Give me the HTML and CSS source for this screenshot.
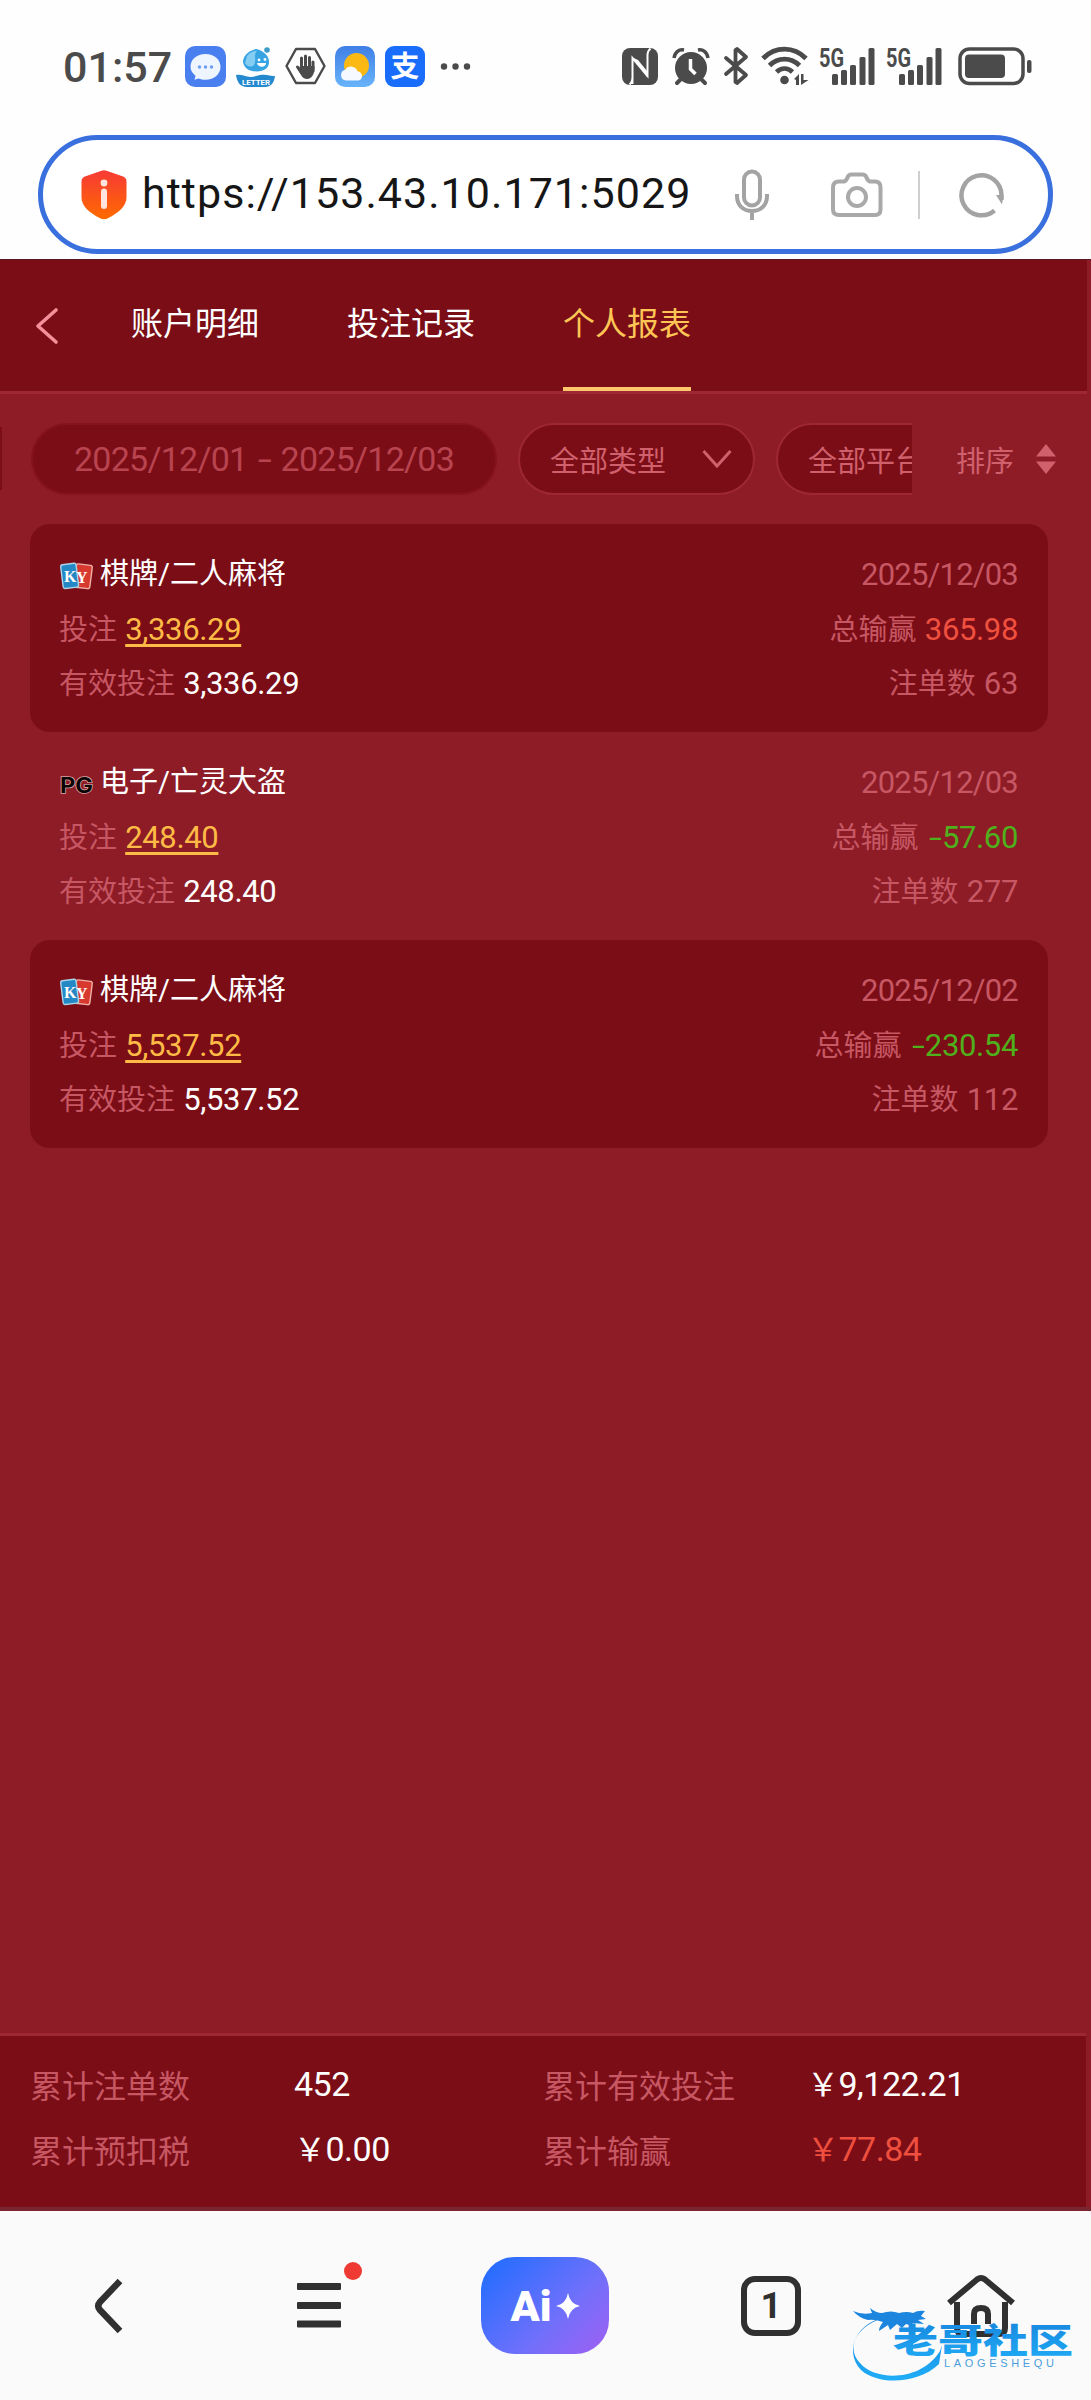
FILE: index.html
```html
<!DOCTYPE html>
<html lang="zh-CN">
<head>
<meta charset="utf-8">
<title>个人报表</title>
<link rel="stylesheet" href="styles.css">
</head>
<body>
<header class="browser-top">
  <div class="status">
    <div class="status-left">
      <span class="clock">01:57</span>
      <div class="apps">
        <svg width="41" height="41" viewBox="0 0 41 41"><rect width="41" height="41" rx="10" fill="#4a7ff0"/><path d="M20.500 8c9 0 15 5.500 15 12.800s-6 13-15 13c-2.800 0-4.600-.3-7-1.300l-4 1.200 1-4c-3-2.300-5-5-5-8.900C5.500 13.500 11.500 8 20.500 8z" fill="#eef5ff"/><g fill="#6d9cf0"><circle cx="14.500" cy="21" r="1.700"/><circle cx="20.500" cy="21" r="1.700"/><circle cx="26.500" cy="21" r="1.700"/></g></svg>
        <svg width="41" height="41" viewBox="0 0 41 41"><path d="M21 3C26 4 34 8 34 16c0 6-5 9.500-12.500 9.500S9 22 8 16c0-5 4-11 13-13z" fill="#36a3e3"/><path d="M12 10c3-4 7-5 10-5-4 4 0 9-3 14-3 3-8 1-9-2z" fill="#83cdf3"/><circle cx="32" cy="4" r="2.800" fill="#3c9cc9"/><circle cx="24" cy="14" r="1.400" fill="#fff"/><circle cx="30" cy="13.500" r="1.400" fill="#fff"/><path d="M22 17h9c0 5-8 5-9 0z" fill="#fff"/><path d="M1 29c8-1 11 4 20 1 8-3 14 0 19 0-1 7-4 11-10 11H12C5 41 2 36 1 29z" fill="#2489cf"/><text x="7" y="38.500" class="letter-tag" textLength="28" lengthAdjust="spacingAndGlyphs">LETTER</text></svg>
        <svg width="41" height="41" viewBox="0 0 41 41"><path d="M11 3h19l9.500 17L30 37H11L1.500 20z" fill="#fff" stroke="#4b4b4b" stroke-width="2.400" stroke-linejoin="round"/><g stroke="#4b4b4b" stroke-width="3" stroke-linecap="round"><path d="M16.500 12v12M20.500 10v14M24.500 11.500v12M28 16v9M12.500 21l4 6"/></g><path d="M15 20h14.400c.8 7-2.400 13-7.400 13-4.500 0-6-4-8.500-9z" fill="#4b4b4b"/></svg>
        <svg width="41" height="41" viewBox="0 0 41 41"><defs><linearGradient id="sky" x1="0" y1="0" x2="0" y2="1"><stop offset="0" stop-color="#3f7fe6"/><stop offset="1" stop-color="#68b4fa"/></linearGradient></defs><rect width="40" height="41" rx="10" fill="url(#sky)"/><circle cx="21.500" cy="19.500" r="12.500" fill="#fdb913"/><path d="M11 34.500a5.500 5.500 0 0 1-.8-10.800 7 7 0 0 1 12.500 1.800 4.600 4.600 0 0 1 1 9z" fill="#f6f9ff"/></svg>
        <svg width="41" height="41" viewBox="0 0 41 41"><rect width="40" height="41" rx="9" fill="#1a6dfb"/><text x="5.500" y="31" class="pay-mark">支</text></svg>
        <svg class="more" width="32" height="41" viewBox="0 0 32 41" fill="#4b4b4b"><circle cx="5" cy="20.500" r="3.200"/><circle cx="16.500" cy="20.500" r="3.200"/><circle cx="28" cy="20.500" r="3.200"/></svg>
      </div>
    </div>
    <div class="status-right">
      <svg class="nfc" width="38" height="40" viewBox="0 0 38 40"><rect x="1" y="2" width="36" height="37" rx="8" fill="#4b4b4b"/><path d="M11.500 38V12l15 18V9q0-4 3-6.500M11.500 31q0 5-3 7.500" fill="none" stroke="#fefefe" stroke-width="2"/><path d="M11.500 11.500L17 14l9 11v6z" fill="#fefefe"/></svg>
      <svg class="alarm" width="38" height="40" viewBox="0 0 38 40"><circle cx="19" cy="22" r="16" fill="#4b4b4b"/><path d="M8 34l-3 3M30 34l3 3" stroke="#4b4b4b" stroke-width="4" stroke-linecap="round"/><path d="M2 12c1-6 5-9 10-8M36 12c-1-6-5-9-10-8" fill="none" stroke="#4b4b4b" stroke-width="3.500"/><path d="M18.500 13v10l5 5" fill="none" stroke="#fff" stroke-width="3.500"/></svg>
      <svg class="bt" width="26" height="40" viewBox="0 0 26 40"><path d="M3 12l20 17-9 8-1.500-1V4L14 3l9 8L3 28" fill="none" stroke="#4b4b4b" stroke-width="3.800" stroke-linejoin="round" stroke-linecap="round"/></svg>
      <svg class="wifi" width="48" height="40" viewBox="0 0 48 40"><g fill="none" stroke="#4b4b4b" stroke-width="4.800"><path d="M2 12.500c12-12.500 31-12.500 43 0"/><path d="M8.500 19.500c8.500-8.500 21.500-8.500 30 0"/><path d="M15.500 26c5-4.600 11-4.600 16 0"/></g><circle cx="23.500" cy="34" r="4.300" fill="#4b4b4b"/><path d="M33 33l5-5v11h-3v-5zM40 28h2.500v6h5L40 39z" fill="#4b4b4b"/></svg>
      <svg class="sig" width="57" height="40" viewBox="0 0 57 40" fill="#4b4b4b"><text x="0" y="20.500" class="g5" textLength="25" lengthAdjust="spacingAndGlyphs">5G</text><rect x="13" y="28" width="6" height="11" rx="1.500"/><rect x="22" y="24" width="6" height="15" rx="1.500"/><rect x="31" y="19" width="6" height="20" rx="1.500"/><rect x="40.500" y="11" width="6" height="28" rx="1.500"/><rect x="49.500" y="2" width="6" height="37" rx="1.500"/></svg>
      <svg class="sig" width="57" height="40" viewBox="0 0 57 40" fill="#4b4b4b"><text x="0" y="20.500" class="g5" textLength="25" lengthAdjust="spacingAndGlyphs">5G</text><rect x="13" y="28" width="6" height="11" rx="1.500"/><rect x="22" y="24" width="6" height="15" rx="1.500"/><rect x="31" y="19" width="6" height="20" rx="1.500"/><rect x="40.500" y="11" width="6" height="28" rx="1.500"/><rect x="49.500" y="2" width="6" height="37" rx="1.500"/></svg>
      <svg class="batt" width="76" height="40" viewBox="0 0 76 40"><rect x="2" y="3" width="63" height="34.500" rx="9.500" fill="none" stroke="#4b4b4b" stroke-width="3.500"/><rect x="7" y="8.500" width="40" height="23.500" rx="4" fill="#4b4b4b"/><rect x="69" y="14" width="4.500" height="13" rx="2" fill="#4b4b4b"/></svg>
    </div>
  </div>
  <div class="address">
    <svg class="shield" width="46" height="50" viewBox="0 0 46 50"><defs><linearGradient id="warn" x1="0" y1="0" x2="0" y2="1"><stop offset="0" stop-color="#f73a35"/><stop offset="1" stop-color="#ff6a00"/></linearGradient></defs><path d="M20.500.8q2.500-1 5 0L42 6.500q3.500 1.300 3.500 5V27c0 9-7 15-18.500 21.300q-4 2-8 0C7.500 42 .5 36 .5 27V11.500q0-3.700 3.500-5z" fill="url(#warn)"/><circle cx="23" cy="13" r="3.400" fill="#ffe3dc"/><rect x="20" y="18.500" width="6" height="20.500" rx="3" fill="#ffe3dc"/></svg>
    <span class="url">https://153.43.10.171:5029</span>
    <svg class="mic" width="34" height="52" viewBox="0 0 34 52" fill="none" stroke="#a3a3a3" stroke-width="4"><rect x="9" y="2.500" width="16" height="34" rx="8"/><path d="M2 25v2c0 9 6 15 15 15s15-6 15-15v-2M17 42v9"/></svg>
    <svg class="cam" width="52" height="46" viewBox="0 0 52 46" fill="none" stroke="#a9a9a9" stroke-width="4"><path d="M8 9.500h4q2.500 0 3.500-2l1.500-3q1-2 3.500-2h11q2.500 0 3.500 2l1.500 3q1 2 3.500 2h4q5.500 0 5.500 6v22q0 5.500-5.500 5.500H8Q2 43 2 37.500v-22q0-6 6-6z"/><circle cx="26" cy="25" r="9"/></svg>
    <i class="divider"></i>
    <svg class="reload" width="46" height="48" viewBox="0 0 46 48"><path d="M35.500 39.500A20 20 0 1 1 42.500 24v5" fill="none" stroke="#a3a3a3" stroke-width="4.500"/><path d="M37 24h7.500l-1.500 9.500z" fill="#a3a3a3"/></svg>
  </div>
</header>

<main class="page">
  <nav class="tabs">
    <svg class="back" width="24" height="38" viewBox="0 0 24 38"><path d="M21 3L3 19l18 16" fill="none" stroke="#f4909a" stroke-width="3.600" stroke-linecap="round" stroke-linejoin="round"/></svg>
    <a class="tab">账户明细</a>
    <a class="tab">投注记录</a>
    <a class="tab active">个人报表</a>
  </nav>

  <section class="filters">
    <div class="scroller">
      <i class="pill-edge"></i>
      <span class="pill date">2025/12/01<b class="dash">-</b>2025/12/03</span>
      <span class="pill">全部类型<svg width="30" height="20" viewBox="0 0 30 20"><path d="M1.500 2L15 17 28.500 2" fill="none" stroke="#d0606c" stroke-width="3"/></svg></span>
      <span class="pill">全部平台<svg width="30" height="20" viewBox="0 0 30 20"><path d="M1.500 2L15 17 28.500 2" fill="none" stroke="#d0606c" stroke-width="3"/></svg></span>
    </div>
    <span class="sort">排序<svg width="20" height="30" viewBox="0 0 20 30" fill="#d0606c"><path d="M10 0l10 12.500H0zM10 30L0 17.500h20z"/></svg></span>
  </section>

  <section class="records">
    <article class="record shaded">
      <div class="line title"><span class="name"><svg width="35" height="30" viewBox="0 0 35 30"><g transform="rotate(7 24 16)"><rect x="16" y="3.500" width="16" height="23.500" rx="2" fill="#d8392f" stroke="#efb0a8" stroke-width="1.400"/></g><g transform="rotate(-7 10 16)"><rect x="3" y="3" width="15.500" height="24" rx="2" fill="#2488c4" stroke="#a9d5ea" stroke-width="1.400"/></g><text x="5" y="21" class="ky">K</text><text x="17" y="22" class="ky">Y</text></svg>棋牌/二人麻将</span><span class="num">2025/12/03</span></div>
      <div class="line"><span>投注 <u class="num">3,336.29</u></span><span>总输赢 <em class="num win">365.98</em></span></div>
      <div class="line"><span>有效投注 <em class="num plain">3,336.29</em></span><span>注单数 <em class="num">63</em></span></div>
    </article>
    <article class="record">
      <div class="line title"><span class="name"><svg width="35" height="30" viewBox="0 0 35 30"><text x="1" y="24" class="pg" textLength="33" lengthAdjust="spacingAndGlyphs">PG</text></svg>电子/亡灵大盗</span><span class="num">2025/12/03</span></div>
      <div class="line"><span>投注 <u class="num">248.40</u></span><span>总输赢 <em class="num loss"><b class="minus">-</b>57.60</em></span></div>
      <div class="line"><span>有效投注 <em class="num plain">248.40</em></span><span>注单数 <em class="num">277</em></span></div>
    </article>
    <article class="record shaded">
      <div class="line title"><span class="name"><svg width="35" height="30" viewBox="0 0 35 30"><g transform="rotate(7 24 16)"><rect x="16" y="3.500" width="16" height="23.500" rx="2" fill="#d8392f" stroke="#efb0a8" stroke-width="1.400"/></g><g transform="rotate(-7 10 16)"><rect x="3" y="3" width="15.500" height="24" rx="2" fill="#2488c4" stroke="#a9d5ea" stroke-width="1.400"/></g><text x="5" y="21" class="ky">K</text><text x="17" y="22" class="ky">Y</text></svg>棋牌/二人麻将</span><span class="num">2025/12/02</span></div>
      <div class="line"><span>投注 <u class="num">5,537.52</u></span><span>总输赢 <em class="num loss"><b class="minus">-</b>230.54</em></span></div>
      <div class="line"><span>有效投注 <em class="num plain">5,537.52</em></span><span>注单数 <em class="num">112</em></span></div>
    </article>
  </section>

  <section class="summary">
    <span>累计注单数</span><span class="value">452</span><span>累计有效投注</span><span class="value"><i class="yen">￥</i>9,122.21</span>
    <span>累计预扣税</span><span class="value"><i class="yen">￥</i>0.00</span><span>累计输赢</span><span class="value red"><i class="yen">￥</i>77.84</span>
  </section>
</main>

<footer class="toolbar">
  <svg class="t-back" width="30" height="56" viewBox="0 0 30 56"><path d="M26 3L6 24q-3.500 4 0 8l20 21" fill="none" stroke="#303030" stroke-width="6.500"/></svg>
  <span class="t-menu"><svg width="44" height="46" viewBox="0 0 44 46" fill="#303030"><rect y="0" width="44" height="7" rx="1"/><rect y="19" width="44" height="7" rx="1"/><rect y="37.500" width="44" height="7" rx="1"/></svg><i class="dot"></i></span>
  <span class="t-ai">Ai<svg width="24" height="26" viewBox="0 0 24 26"><path d="M12 0q2 11 12 13-10 2-12 13-2-11-12-13Q10 11 12 0z" fill="#fff"/></svg></span>
  <span class="t-count">1</span>
  <svg class="t-home" width="70" height="64" viewBox="0 0 70 64" fill="none" stroke="#303030"><path d="M3 29L31 5.500q4-3 8 0L67 29" stroke-width="6"/><path d="M11 28v26q0 6 6 6h36q6 0 6-6V28" stroke-width="6"/><path d="M28 50V40q0-6 7-6t7 6v10" stroke-width="6"/></svg>
  <svg class="watermark" width="228" height="75" viewBox="0 0 228 75"><defs><linearGradient id="wm" x1="0" y1="0" x2="0" y2="1"><stop offset="0" stop-color="#1682dc"/><stop offset="1" stop-color="#20adf6"/></linearGradient></defs><path d="M36 12C4 20-8 43 7 59c16 19 62 18 80-12l2-6-3 19C64 81 24 81 8 66-10 46 4 17 36 12z" fill="url(#wm)"/><path d="M0 7q9 4 19 2l-2-5q6 5 12 5 9-3 17 0 8-2 14 0 5-3 12-2l-4 5 5 3-8 1 6 4-12-1 4 4-10-3-4 4-5-4-7 6-2-5-9 6q0-4 4-9-9-3-15-2Q6 14 0 7z" fill="#1c86df"/><text x="40" y="49" class="wm-cn" textLength="180" lengthAdjust="spacingAndGlyphs" fill="url(#wm)">老哥社区</text><text x="91" y="63" class="wm-en" textLength="110">LAOGESHEQU</text></svg>
</footer>
</body>
</html>
```
FILE: styles.css
```css
* { box-sizing: border-box; }
body { margin: 0; width: 1091px; height: 2400px; display: flex; flex-direction: column; overflow: hidden; background: #fff; font-family: Roboto, "Noto Sans CJK SC", sans-serif; }
svg { display: block; flex: none; overflow: visible; }
em, i { font-style: normal; }

.browser-top { height: 259px; background: #fefefe; flex: none; }
.status { height: 135px; padding: 46px 57px 0 63px; display: flex; justify-content: space-between; }
.status-left { display: flex; }
.clock { width: 122px; font-size: 43px; line-height: 42px; font-weight: 500; color: #4b4b4b; }
.apps { display: flex; gap: 9px; }
.more { margin-left: 4px; }
.letter-tag { font: 700 8px/1 Roboto, sans-serif; fill: #fff; }
.pay-mark { font: 700 29px/1 "Noto Sans CJK SC", sans-serif; fill: #fff; }
.g5 { font: 700 25px/1 Roboto, sans-serif; }
.status-right { display: flex; align-items: flex-start; }
.alarm { margin-left: 13px; }
.bt { margin-left: 13px; }
.wifi { margin-left: 12px; }
.sig { margin-left: 10px; }
.batt { margin-left: 15px; }

.address { height: 119px; margin: 0 38px; border: 5px solid #3a6fde; border-radius: 60px; display: flex; align-items: center; padding-left: 38px; background: #fff; }
.url { width: 548px; margin: -4px 45px 0 15px; font-size: 43px; line-height: 50px; letter-spacing: 1.05px; color: #161616; white-space: nowrap; }
.cam { margin-left: 62px; }
.divider { width: 2px; height: 48px; margin: 0 39px 0 35px; background: #cfcfcf; }

.page { height: 1952px; flex: none; display: flex; flex-direction: column; background: #8d1c27; border-top: 1px solid #5e1a22; border-bottom: 4px solid #7a2630; color: #c65763; font-size: 29px; }
.tabs { height: 134px; width: 1087px; flex: none; display: flex; align-items: center; background: #7b0d17; border-bottom: 3px solid #9d2833; }
.back { margin: 0 72px 0 35px; }
.tab { height: 131px; line-height: 128px; margin-right: 88px; font-size: 32px; color: #fff; border-bottom: 4px solid transparent; }
.tab.active { color: #ffc655; border-bottom-color: #ffc66b; }

.filters { height: 129px; margin-bottom: 1px; flex: none; display: flex; align-items: center; }
.scroller { width: 912px; display: flex; align-items: center; overflow: hidden; }
.pill-edge { width: 2px; height: 63px; margin-right: 29px; flex: none; background: #7b0d17; }
.pill { flex: none; width: 237px; height: 72px; margin-right: 21px; padding: 0 21px 0 30px; border: 2px solid #9d2833; border-radius: 36px; background: #7b0d17; display: flex; align-items: center; justify-content: space-between; color: #d0606c; }
.pill.date { width: 466px; padding: 0 41px; border-color: #85121d; font-size: 34px; letter-spacing: -.75px; color: #b84450; }
.dash, .minus { display: inline-block; font-weight: inherit; transform: scaleX(1.5); }
.minus { margin: 0 3px 0 4px; }
.sort { margin-left: 44px; display: flex; align-items: center; gap: 22px; color: #d0606c; }

.records { flex: 1; padding: 0 0 0 30px; }
.record { width: 1018px; height: 208px; padding: 22px 30px 0 29px; border-radius: 20px; }
.shaded { background: #7b0d17; }
.line { height: 54px; display: flex; justify-content: space-between; align-items: center; line-height: 54px; }
.line.title { height: 57px; line-height: 57px; }
.name { display: flex; align-items: center; gap: 6px; color: #fff; }
.name svg { margin-top: 3px; }
.num { font-size: 31px; letter-spacing: -.35px; }
.line > .num { font-size: 31px; letter-spacing: -.8px; }
.line span .num { margin-left: 1px; }
u.num { color: #ffbb45; text-decoration-thickness: 3px; text-underline-offset: 4px; }
.line .plain { color: #fff; }
.line span .win { color: #f0513f; }
.line span .loss { color: #4fb01c; }
.ky { font: 700 16px/1 "Liberation Serif", serif; fill: #fff; }
.pg { font: 700 21px/1 Inter, sans-serif; fill: #0b0506; stroke: #d9a5a5; stroke-width: 1.500px; paint-order: stroke; }

.summary { width: 1086px; height: 174px; flex: none; padding: 15px 0 26px 30px; border-top: 3px solid #9d2833; background: #7b0d17; display: grid; grid-template-columns: 264px 249px 264px 1fr; grid-template-rows: 65px 65px; align-items: center; font-size: 32px; }
.value { font-size: 34px; color: #fff; letter-spacing: -.5px; }
.yen { font-family: "Noto Sans CJK SC", sans-serif; font-size: 32px; line-height: 1; }
.red { color: #ee4f3e; }

.toolbar { position: relative; height: 189px; flex: none; padding-left: 94px; display: flex; align-items: center; background: #fafafa; }
.t-menu { position: relative; margin-left: 173px; }
.dot { position: absolute; left: 47px; top: -21px; width: 18px; height: 18px; border-radius: 50%; background: #ee3a33; }
.t-ai { width: 128px; height: 97px; margin-left: 140px; border-radius: 34px; background: linear-gradient(135deg, #1c6dff, #6f70fb 60%, #a15ff2); color: #fff; display: flex; align-items: center; justify-content: center; gap: 4px; font-size: 43px; font-weight: 900; }
.t-count { width: 60px; height: 60px; margin-left: 132px; border: 6px solid #303030; border-radius: 14px; display: flex; align-items: center; justify-content: center; font-size: 37px; font-weight: 700; color: #303030; }
.t-home { margin-left: 145px; }
.watermark { position: absolute; left: 853px; top: 93px; }
.wm-cn { font: 900 34px/1 "Noto Sans CJK SC", sans-serif; }
.wm-en { font: 11px/1 "Liberation Sans", sans-serif; fill: #4a9fdc; }
```
